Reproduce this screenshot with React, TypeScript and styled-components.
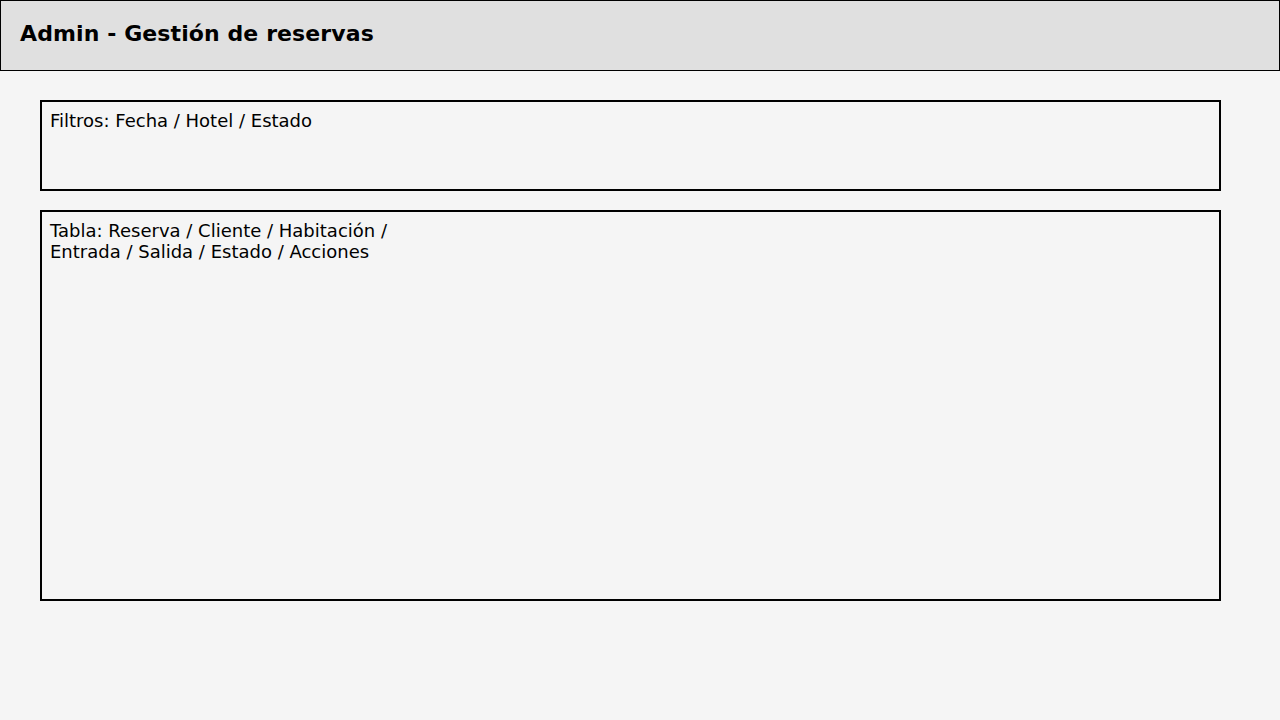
import React from "react";
import styled, { createGlobalStyle } from "styled-components";

const Global = createGlobalStyle`
  html, body { margin: 0; padding: 0; background: #f5f5f5; }
  body {
    font-family: "DejaVu Sans", sans-serif;
    color: #000;
  }
`;

const Page = styled.div`
  width: 1280px;
  height: 720px;
  background: #f5f5f5;
`;

const Header = styled.header`
  box-sizing: border-box;
  height: 71px;
  border: 1px solid #000;
  background: #e0e0e0;
  display: flex;
  align-items: center;
  padding: 0 0 4px 19px;
`;

const Title = styled.h1`
  margin: 0;
  font-size: 22px;
  font-weight: bold;
  letter-spacing: 0.1px;
`;

const Main = styled.main`
  display: flex;
  flex-direction: column;
  gap: 19px;
  padding: 29px 40px;
`;

const Panel = styled.section<{ $h: number }>`
  box-sizing: border-box;
  width: 1181px;
  height: ${(p) => p.$h}px;
  border: 2px solid #000;
  padding: 8px 8px;
  font-size: 18px;
  line-height: 21px;
`;

const Line = styled.div``;

export default function App() {
  return (
    <Page>
      <Global />
      <Header>
        <Title>Admin - Gestión de reservas</Title>
      </Header>
      <Main>
        <Panel $h={91}>
          <Line>Filtros: Fecha / Hotel / Estado</Line>
        </Panel>
        <Panel $h={391}>
          <Line>Tabla: Reserva / Cliente / Habitación /</Line>
          <Line>Entrada / Salida / Estado / Acciones</Line>
        </Panel>
      </Main>
    </Page>
  );
}
